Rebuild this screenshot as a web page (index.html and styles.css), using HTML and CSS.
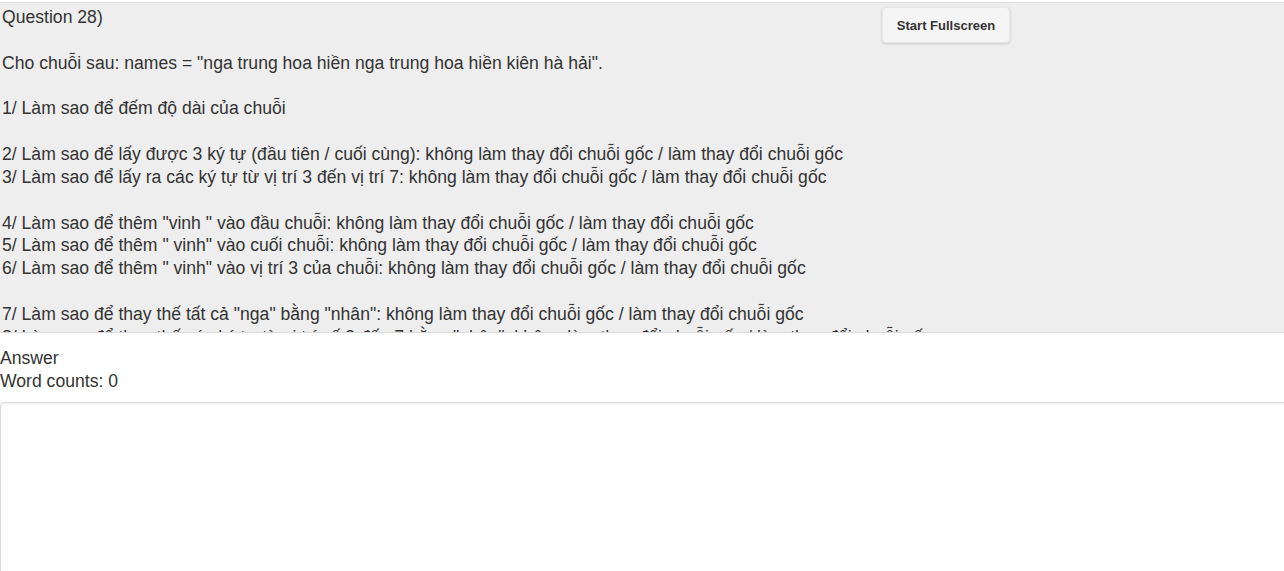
FILE: index.html
```html
<!DOCTYPE html>
<html lang="vi">
<head>
<meta charset="utf-8">
<title>Question 28</title>
<link rel="stylesheet" href="styles.css">
</head>
<body>
<div class="question-panel">
<button class="fs-btn" type="button">Start Fullscreen</button>
<div class="question-text">Question 28)

Cho chuỗi sau: names = "nga trung hoa hiền nga trung hoa hiền kiên hà hải".

1/ Làm sao để đếm độ dài của chuỗi

2/ Làm sao để lấy được 3 ký tự (đầu tiên / cuối cùng): không làm thay đổi chuỗi gốc / làm thay đổi chuỗi gốc
3/ Làm sao để lấy ra các ký tự từ vị trí 3 đến vị trí 7: không làm thay đổi chuỗi gốc / làm thay đổi chuỗi gốc

4/ Làm sao để thêm "vinh " vào đầu chuỗi: không làm thay đổi chuỗi gốc / làm thay đổi chuỗi gốc
5/ Làm sao để thêm " vinh" vào cuối chuỗi: không làm thay đổi chuỗi gốc / làm thay đổi chuỗi gốc
6/ Làm sao để thêm " vinh" vào vị trí 3 của chuỗi: không làm thay đổi chuỗi gốc / làm thay đổi chuỗi gốc

7/ Làm sao để thay thế tất cả "nga" bằng "nhân": không làm thay đổi chuỗi gốc / làm thay đổi chuỗi gốc
8/ Làm sao để thay thế các ký tự từ vị trí số 3 đến 7 bằng "nhân": không làm thay đổi chuỗi gốc / làm thay đổi chuỗi gốc</div>
</div>
<div class="answer">
<div class="answer-label">Answer</div>
<div class="word-count">Word counts: 0</div>
<textarea class="answer-box"></textarea>
</div>
</body>
</html>
```
FILE: styles.css
```css
html, body {
  margin: 0;
  padding: 0;
  background: #fff;
  overflow: hidden;
}
body {
  font-family: "Liberation Sans", Arial, sans-serif;
  font-size: 17.6px;
  line-height: 22.85px;
  color: #333;
}
.question-panel {
  position: relative;
  margin-top: 2px;
  height: 329px;
  overflow: hidden;
  background: #eee;
  border-top: 1px solid #ddd;
  border-bottom: 1px solid #ddd;
}
.question-text {
  white-space: pre-line;
  padding: 3px 0 0 2px;
}
.fs-btn {
  position: absolute;
  top: 4px;
  left: 882px;
  width: 128px;
  height: 36px;
  font-family: "Liberation Sans", Arial, sans-serif;
  font-size: 13px;
  font-weight: bold;
  color: #333;
  background: #f5f5f5;
  border: 1px solid #e6e6e6;
  border-radius: 4px;
  box-shadow: 0 1px 3px rgba(0, 0, 0, 0.15);
  padding: 0;
}
.answer {
  padding-top: 14px;
}
.answer-box {
  display: block;
  margin-top: 9px;
  width: calc(100% + 20px);
  height: 200px;
  box-sizing: border-box;
  border: 1px solid #ddd;
  border-radius: 4px;
  box-shadow: inset 0 1px 2px rgba(0, 0, 0, 0.08);
  background: #fff;
  resize: none;
}
```
